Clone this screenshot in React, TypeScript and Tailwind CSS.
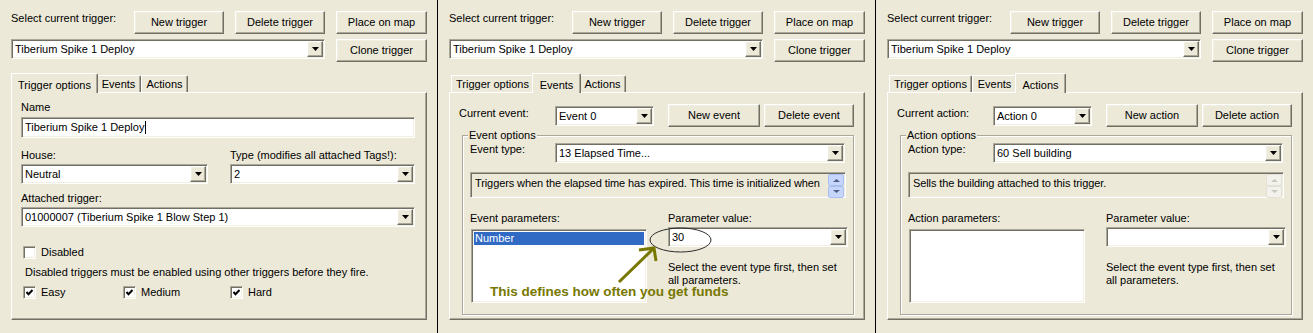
import type { ReactNode } from "react";

/* classic XP 3D edges */
const raised =
  "border border-t-white border-l-white border-r-[#716f64] border-b-[#716f64] shadow-[inset_-1px_-1px_0_#aca899,inset_1px_1px_0_#f1efe2]";
const sunken =
  "border border-t-[#aca899] border-l-[#aca899] border-r-white border-b-white shadow-[inset_1px_1px_0_#716f64,inset_-1px_-1px_0_#f1efe2]";

function Button({ className = "", children }: { className?: string; children: ReactNode }) {
  return (
    <div className={`flex h-[23px] shrink-0 items-center justify-center bg-[#ece9d8] ${raised} ${className}`}>
      {children}
    </div>
  );
}

function Arrow() {
  return (
    <div className={`flex h-full w-[16px] shrink-0 items-center justify-center bg-[#ece9d8] ${raised}`}>
      <svg width="7" height="4" viewBox="0 0 7 4">
        <polygon points="0,0 7,0 3.5,4" fill="#000" />
      </svg>
    </div>
  );
}

function Combo({ className = "", value = "" }: { className?: string; value?: string }) {
  return (
    <div className={`flex h-[20px] shrink-0 items-stretch bg-white p-[1px] ${sunken} ${className}`}>
      <span className="flex flex-1 items-center overflow-hidden whitespace-nowrap pl-[2px]">{value}</span>
      <Arrow />
    </div>
  );
}

function Check({ checked, label, className = "" }: { checked?: boolean; label: string; className?: string }) {
  return (
    <div className={`flex h-[13px] items-center ${className}`}>
      <div className={`flex h-[13px] w-[13px] items-center justify-center bg-white ${sunken}`}>
        {checked && (
          <svg width="9" height="9" viewBox="0 0 9 9">
            <polyline points="1.5,4 3.5,6.2 7.5,2" fill="none" stroke="#000" strokeWidth="2" />
          </svg>
        )}
      </div>
      <span className="ml-[5px] leading-[13px]">{label}</span>
    </div>
  );
}

function Tabs({ active }: { active: number }) {
  const tabs = [
    { label: "Trigger options", w: "w-[83px]", wa: "w-[87px]" },
    { label: "Events", w: "w-[45px]", wa: "w-[49px]" },
    { label: "Actions", w: "w-[47px]", wa: "w-[51px]" },
  ];
  return (
    <div className="mt-[11px] flex h-[19px] items-end pl-[2px]">
      {tabs.map((t, i) =>
        i === active ? (
          <div
            key={t.label}
            className={`relative z-10 -mx-[2px] -mb-px flex h-[20px] justify-center rounded-tr-[2px] border-t border-l border-r border-t-white border-l-white border-r-[#716f64] bg-[#ece9d8] pt-[3px] shadow-[inset_-1px_0_0_#aca899] ${t.wa}`}
          >
            {t.label}
          </div>
        ) : (
          <div
            key={t.label}
            className={`flex h-[17px] items-center justify-center rounded-tr-[2px] border-t border-l border-r border-t-white border-l-white border-r-[#716f64] shadow-[inset_-1px_0_0_#aca899] ${t.w}`}
          >
            {t.label}
          </div>
        )
      )}
    </div>
  );
}

function Panel({ active, children }: { active: number; children: ReactNode }) {
  return (
    <div className="relative flex w-[437px] shrink-0 flex-col pt-[11px] pr-[10px] pl-[11px]">
      <div className="flex h-[23px] items-start">
        <span className="w-[124px] pt-[1px] leading-[13px]">Select current trigger:</span>
        <Button className="w-[90px]">New trigger</Button>
        <Button className="ml-[11px] w-[90px]">Delete trigger</Button>
        <Button className="ml-[11px] w-[91px]">Place on map</Button>
      </div>
      <div className="mt-[5px] flex h-[23px] items-start">
        <Combo className="w-[314px]" value="Tiberium Spike 1 Deploy" />
        <Button className="ml-[11px] w-[91px]">Clone trigger</Button>
      </div>
      <Tabs active={active} />
      <div className="h-[228px] border border-t-white border-l-white border-r-[#716f64] border-b-[#716f64] shadow-[inset_-1px_-1px_0_#aca899]">
        {children}
      </div>
    </div>
  );
}

function TriggerOptions() {
  return (
    <div className="flex flex-col pt-[8px] pr-[11px] pl-[9px]">
      <span className="leading-[13px]">Name</span>
      <div className={`mt-[3px] flex h-[21px] items-center bg-white pl-[3px] ${sunken}`}>
        <span className="border-r border-black pr-[1px] leading-[13px]">Tiberium Spike 1 Deploy</span>
      </div>
      <div className="mt-[11px] grid grid-cols-[187px_185px] gap-x-[22px] gap-y-[2px]">
        <span className="leading-[13px]">House:</span>
        <span className="leading-[13px]">Type (modifies all attached Tags!):</span>
        <Combo value="Neutral" />
        <Combo value="2" />
      </div>
      <span className="mt-[8px] leading-[13px]">Attached trigger:</span>
      <Combo className="mt-[2px]" value="01000007 (Tiberium Spike 1 Blow Step 1)" />
      <Check className="mt-[19px] ml-[2px]" label="Disabled" />
      <span className="mt-[7px] ml-[4px] leading-[13px]">
        Disabled triggers must be enabled using other triggers before they fire.
      </span>
      <div className="mt-[7px] ml-[2px] flex">
        <Check className="w-[100px]" checked label="Easy" />
        <Check className="w-[107px]" checked label="Medium" />
        <Check checked label="Hard" />
      </div>
    </div>
  );
}

function ScrollBtn({ up, enabled }: { up?: boolean; enabled: boolean }) {
  return (
    <div
      className={`flex h-[12px] w-[16px] items-center justify-center rounded-[2px] border ${
        enabled ? "border-[#a9bff0] bg-[#c6d5fb]" : "border-[#e3e1d6] bg-[#f3f2ec]"
      }`}
    >
      <svg width="7" height="4" viewBox="0 0 7 4">
        <polygon points={up ? "0,4 7,4 3.5,1 " : "0,0 7,0 3.5,3"} fill={enabled ? "#4d6185" : "#c9c7ba"} />
        <rect x="1" y={up ? 3 : 0} width="5" height="1" fill={enabled ? "#4d6185" : "#c9c7ba"} />
      </svg>
    </div>
  );
}

function ItemTab({
  kind,
  item,
  typeValue,
  desc,
  scroll,
  param,
  paramValue,
}: {
  kind: string;
  item: string;
  typeValue: string;
  desc: string;
  scroll: boolean;
  param?: string;
  paramValue?: string;
}) {
  const cap = kind === "event" ? "Event" : "Action";
  return (
    <div className="flex flex-col pt-[11px] pr-[10px] pl-[9px]">
      <div className="flex h-[23px] items-start">
        <span className="w-[96px] pt-[3px] leading-[13px]">Current {kind}:</span>
        <Combo className="mt-[2px] w-[99px]" value={item} />
        <Button className="ml-[14px] w-[92px]">New {kind}</Button>
        <Button className="ml-[4px] w-[90px]">Delete {kind}</Button>
      </div>
      <div className="relative mt-[8px] ml-[3px] w-[392px] border border-[#aca899] pt-[7px] pr-[7px] pb-[11px] pl-[7px] shadow-[inset_1px_1px_0_#fff,1px_1px_0_#fff]">
        <span className="absolute -top-[7px] left-[5px] bg-[#ece9d8] px-[1px] leading-[13px]">{cap} options</span>
        <div className="flex items-start">
          <span className="w-[85px] leading-[13px]">{cap} type:</span>
          <Combo className="w-[290px]" value={typeValue} />
        </div>
        <div className={`mt-[9px] flex h-[26px] w-[376px] items-start bg-[#ece9d8] ${sunken}`}>
          <span className="flex-1 overflow-hidden whitespace-nowrap pt-[4px] pr-[3px] pl-[4px] leading-[13px] tracking-[-0.1px]">
            {desc}
          </span>
          <div className="flex flex-col pt-[1px] pr-[1px]">
            <ScrollBtn up enabled={scroll} />
            <ScrollBtn enabled={scroll} />
          </div>
        </div>
        <div className="mt-[14px] grid grid-cols-[177px_180px] gap-x-[21px]">
          <div className="flex flex-col">
            <span className="leading-[13px]">{cap} parameters:</span>
            <div className={`mt-[4px] ml-[1px] h-[74px] bg-white p-[2px] ${sunken}`}>
              {param && <div className="h-[13px] bg-[#316ac5] pl-[1px] leading-[13px] text-white">{param}</div>}
            </div>
          </div>
          <div className="flex flex-col">
            <span className="leading-[13px]">Parameter value:</span>
            <Combo className="mt-[2px]" value={paramValue} />
            <span className="mt-[14px] leading-[13px]">
              Select the event type first, then set
              <br />
              all parameters.
            </span>
          </div>
        </div>
      </div>
    </div>
  );
}

export default function App() {
  return (
    <div className="flex h-[333px] w-[1313px] overflow-hidden bg-[#ece9d8] font-['Liberation_Sans',Arial,sans-serif] text-[11px] text-black">
      <Panel active={0}>
        <TriggerOptions />
      </Panel>
      <div className="w-px shrink-0 bg-black" />
      <Panel active={1}>
        <ItemTab
          kind="event"
          item="Event 0"
          typeValue="13 Elapsed Time..."
          desc="Triggers when the elapsed time has expired. This time is initialized when"
          scroll
          param="Number"
          paramValue="30"
        />
        {/* annotation drawn over the screenshot */}
        <svg className="pointer-events-none absolute top-0 left-0" width="437" height="333">
          <ellipse cx="242.5" cy="240" rx="30.5" ry="12" fill="none" stroke="#2b2b2b" strokeWidth="1" />
          <line x1="181" y1="282" x2="215" y2="249" stroke="#777700" strokeWidth="3" />
          <polyline points="201,250 216,248 218,261" fill="none" stroke="#777700" strokeWidth="3" />
        </svg>
        <span className="absolute top-[284px] left-[52px] text-[13.5px] leading-[16px] font-bold whitespace-nowrap text-[#777700]">
          This defines how often you get funds
        </span>
      </Panel>
      <div className="w-px shrink-0 bg-black" />
      <Panel active={2}>
        <ItemTab
          kind="action"
          item="Action 0"
          typeValue="60 Sell building"
          desc="Sells the building attached to this trigger."
          scroll={false}
        />
      </Panel>
    </div>
  );
}
